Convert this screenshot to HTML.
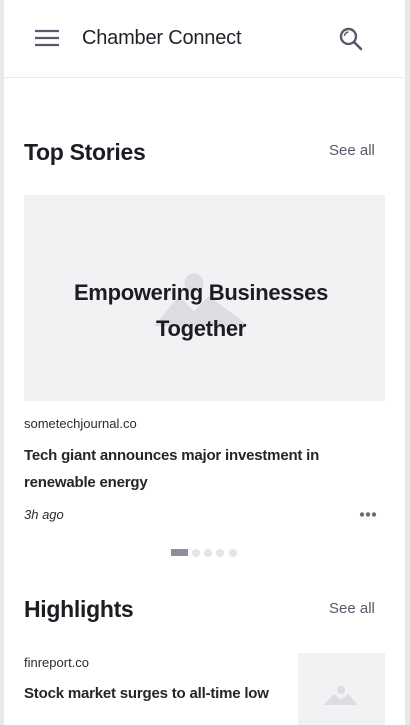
<!DOCTYPE html>
<html><head><meta charset="utf-8"><style>
*{margin:0;padding:0;box-sizing:border-box}
body{width:410px;height:725px;overflow:hidden;background:#e8e9ed;font-family:"Liberation Sans",sans-serif;color:#1b1d22}
.page{position:absolute;left:4px;top:0;width:401px;height:725px;background:#fff}
.hdr{position:absolute;left:0;top:0;width:401px;height:78px;border-bottom:1px solid #ececef}
.ab{position:absolute}
.h2{font-size:23px;font-weight:bold;letter-spacing:-0.3px}
.see{font-size:15px;color:#555a66}
</style></head><body>
<div class="page">
 <div class="hdr">
  <svg class="ab" style="left:31px;top:29px" width="24" height="18"><g stroke="#555b6a" stroke-width="2.2"><line x1="0" y1="2" x2="24" y2="2"/><line x1="0" y1="9" x2="24" y2="9"/><line x1="0" y1="16" x2="24" y2="16"/></g></svg>
  <div class="ab" style="left:78px;top:27px;font-size:20px;letter-spacing:-0.2px;color:#1f2228">Chamber Connect</div>
  <svg class="ab" style="left:335px;top:27px" width="25" height="25"><circle cx="9.5" cy="9.5" r="7.5" fill="none" stroke="#555b6a" stroke-width="2.4"/><path d="M5.5 9a4 4 0 0 1 4-4" stroke="#555b6a" stroke-width="1.5" fill="none"/><line x1="15" y1="15" x2="22" y2="22" stroke="#555b6a" stroke-width="2.6" stroke-linecap="round"/></svg>
 </div>
 <div class="ab h2" style="left:20px;top:139px">Top Stories</div>
 <div class="ab see" style="left:325px;top:142px">See all</div>
 <div class="ab" style="left:20px;top:195px;width:361px;height:206px;background:#f2f2f4">
  <svg class="ab" style="left:130px;top:76px" width="100" height="60"><circle cx="40" cy="12" r="9.5" fill="#dcdde1"/><path d="M0 55 L25 25 L40 40 L55 25 L95 55 Z" fill="#dcdde1"/></svg>
  <div class="ab" style="left:0;top:80px;width:354px;text-align:center;font-size:22px;letter-spacing:-0.3px;font-weight:bold;line-height:36px;color:#1b1d22">Empowering Businesses<br>Together</div>
 </div>
 <div class="ab" style="left:20px;top:416px;font-size:13px;color:#2a2c31">sometechjournal.co</div>
 <div class="ab" style="left:20px;top:442px;font-size:15px;letter-spacing:-0.2px;font-weight:bold;line-height:27px;color:#24262b;width:320px">Tech giant announces major investment in renewable energy</div>
 <div class="ab" style="left:20px;top:507px;font-size:13px;font-style:italic;color:#2a2c31">3h ago</div>
 <svg class="ab" style="left:355px;top:511px" width="20" height="8"><g fill="#666b78"><circle cx="3" cy="3.5" r="2.2"/><circle cx="9" cy="3.5" r="2.2"/><circle cx="15" cy="3.5" r="2.2"/></g></svg>
 <div class="ab" style="left:167px;top:549px;width:17px;height:7px;background:#8c8f9b"></div>
 <div class="ab" style="left:188px;top:549px;width:8px;height:8px;border-radius:50%;background:#e3e4e8"></div>
 <div class="ab" style="left:200px;top:549px;width:8px;height:8px;border-radius:50%;background:#e3e4e8"></div>
 <div class="ab" style="left:212px;top:549px;width:8px;height:8px;border-radius:50%;background:#e3e4e8"></div>
 <div class="ab" style="left:225px;top:549px;width:8px;height:8px;border-radius:50%;background:#e3e4e8"></div>
 <div class="ab h2" style="left:20px;top:596px">Highlights</div>
 <div class="ab see" style="left:325px;top:600px">See all</div>
 <div class="ab" style="left:20px;top:655px;font-size:13px;color:#2a2c31">finreport.co</div>
 <div class="ab" style="left:20px;top:685px;font-size:15px;letter-spacing:-0.2px;font-weight:bold;color:#24262b">Stock market surges to all-time low</div>
 <div class="ab" style="left:294px;top:653px;width:87px;height:72px;background:#f2f2f4">
  <svg class="ab" style="left:26px;top:32px" width="36" height="24"><circle cx="17" cy="5" r="4" fill="#dcdde1"/><path d="M0 20 L10 9 L17 15 L24 9 L34 20 Z" fill="#dcdde1"/></svg>
 </div>
</div>
</body></html>
